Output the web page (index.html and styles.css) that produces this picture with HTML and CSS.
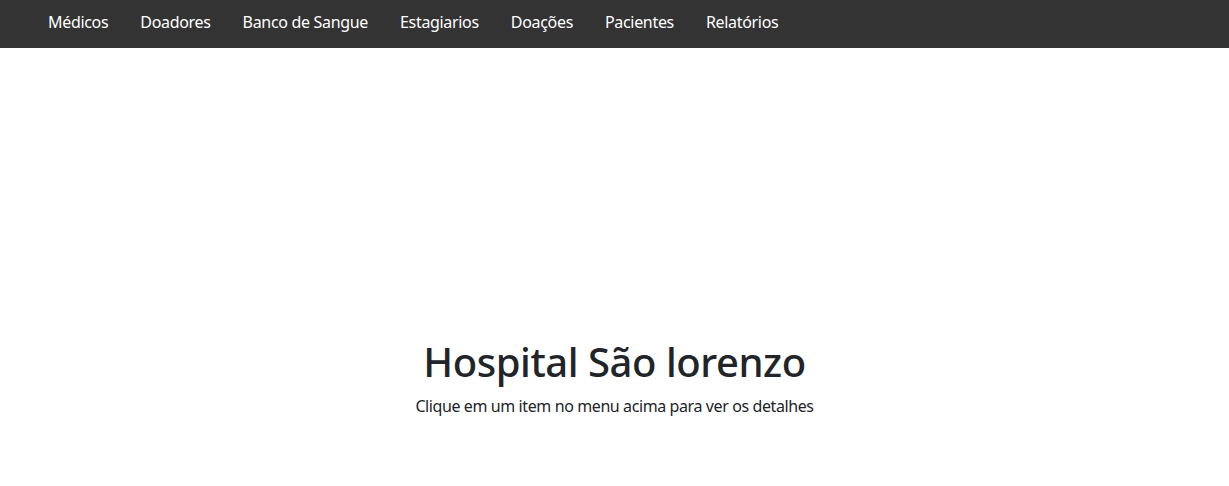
FILE: index.html
```html
<!DOCTYPE html>
<html lang="pt">
<head>
<meta charset="utf-8">
<title>Hospital São lorenzo</title>
<link rel="stylesheet" href="styles.css">
</head>
<body>
<nav class="navbar">
  <ul class="menu">
    <li><a href="#">Médicos</a></li>
    <li><a href="#">Doadores</a></li>
    <li><a href="#">Banco de Sangue</a></li>
    <li><a href="#">Estagiarios</a></li>
    <li><a href="#">Doações</a></li>
    <li><a href="#">Pacientes</a></li>
    <li><a href="#">Relatórios</a></li>
  </ul>
</nav>
<main class="content">
  <h1 class="title">Hospital São lorenzo</h1>
  <p class="subtitle">Clique em um item no menu acima para ver os detalhes</p>
</main>
</body>
</html>
```
FILE: styles.css
```css
* { box-sizing: border-box; }
html, body { margin: 0; padding: 0; background: #fff; }
body {
  font-family: "Noto Sans", "Open Sans", sans-serif;
  color: #212529;
}
.navbar {
  background: #333333;
  height: 48px;
}
.menu {
  list-style: none;
  margin: 0;
  padding: 0 0 0 32px;
  display: flex;
  height: 48px;
  align-items: flex-start;
}
.menu a {
  display: block;
  padding: 0 16px;
  color: #ffffff;
  text-decoration: none;
  font-size: 16px;
  line-height: 44px;
  letter-spacing: -0.32px;
}
.content {
  padding-top: 290px;
  text-align: center;
}
.title {
  margin: 0 0 8px;
  font-size: 40px;
  line-height: 48px;
  font-weight: 500;
  letter-spacing: -0.45px;
}
.subtitle {
  margin: 0;
  font-size: 16px;
  line-height: 24px;
  letter-spacing: -0.4px;
}
```
